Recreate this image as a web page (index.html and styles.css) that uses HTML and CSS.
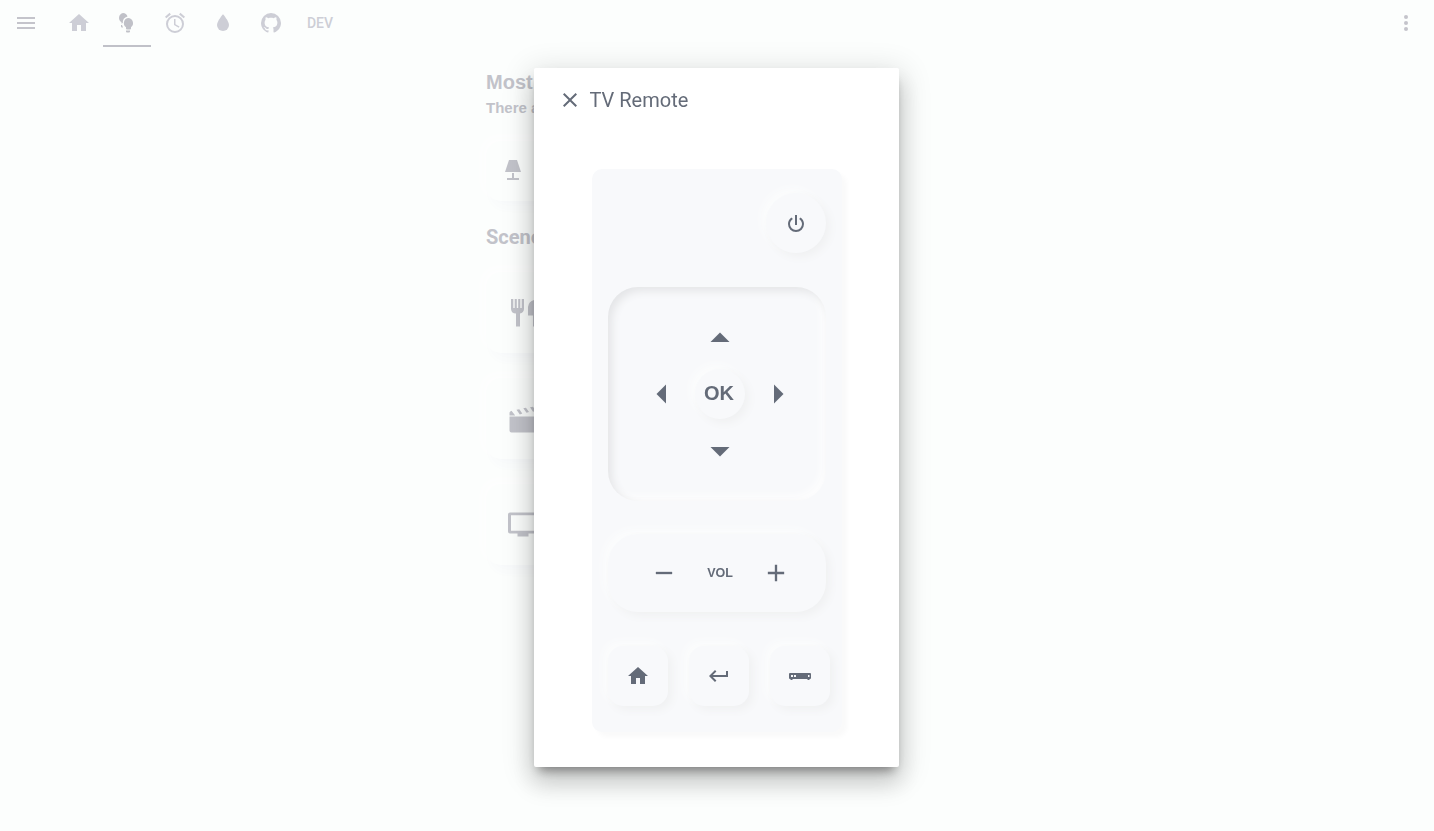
FILE: index.html
```html
<!DOCTYPE html>
<html lang="en">
<head>
<meta charset="utf-8">
<title>TV Remote</title>
<link rel="stylesheet" href="styles.css">
</head>
<body>
<header class="bar">
  <svg class="icon menu" viewBox="0 0 24 24"><path d="M3 6H21V8H3ZM3 11H21V13H3ZM3 16H21V18H3Z"/></svg>
  <nav class="tabs">
    <a class="tab"><svg class="icon" viewBox="0 0 24 24"><path d="M10 20V14H14V20H19V12H22L12 3L2 12H5V20Z"/></svg></a>
    <a class="tab active"><svg class="icon" viewBox="0 0 24 24"><path d="M8 2A5 5 0 0 1 12.500 5.500A6.300 6.300 0 0 0 7.800 12L6.500 12.500V11.200A5 5 0 0 1 8 2Z"/><path d="M6 14H7L8 16.500H7A1 1 0 0 1 6 15.500Z"/><path d="M13 7A5.200 5.200 0 0 1 16 16.300V17.500A1 1 0 0 1 15 18.500H12A1 1 0 0 1 11 17.500V16.300A5.200 5.200 0 0 1 13 7ZM11 19.500H15V20.500A1 1 0 0 1 14 21.500H12A1 1 0 0 1 11 20.500Z"/></svg></a>
    <a class="tab"><svg class="icon" viewBox="0 0 24 24"><path d="M12,20A7,7 0 0,1 5,13A7,7 0 0,1 12,6A7,7 0 0,1 19,13A7,7 0 0,1 12,20M12,4A9,9 0 0,0 3,13A9,9 0 0,0 12,22A9,9 0 0,0 21,13A9,9 0 0,0 12,4M12.5,8H11V14L15.75,16.85L16.5,15.62L12.5,13.25V8M7.88,3.39L6.6,1.86L2,5.71L3.29,7.24L7.88,3.39M22,5.72L17.4,1.86L16.11,3.39L20.71,7.25L22,5.72Z"/></svg></a>
    <a class="tab"><svg class="icon" viewBox="0 0 24 24"><path d="M12,20A6,6 0 0,1 6,14C6,10 12,3.25 12,3.25C12,3.25 18,10 18,14A6,6 0 0,1 12,20Z"/></svg></a>
    <a class="tab"><svg class="icon" viewBox="0 0 24 24"><path d="M12,2A10,10 0 0,0 2,12C2,16.42 4.87,20.17 8.84,21.5C9.34,21.58 9.5,21.27 9.5,21C9.5,20.77 9.5,20.14 9.5,19.31C6.73,19.91 6.14,17.97 6.14,17.97C5.68,16.81 5.03,16.5 5.03,16.5C4.12,15.88 5.1,15.9 5.1,15.9C6.1,15.97 6.63,16.93 6.63,16.93C7.5,18.45 8.97,18 9.54,17.76C9.63,17.11 9.89,16.67 10.17,16.42C7.95,16.17 5.62,15.31 5.62,11.5C5.62,10.39 6,9.5 6.65,8.79C6.55,8.54 6.2,7.5 6.75,6.15C6.75,6.15 7.59,5.88 9.5,7.17C10.29,6.95 11.15,6.84 12,6.84C12.85,6.84 13.71,6.95 14.5,7.17C16.41,5.88 17.25,6.15 17.25,6.15C17.8,7.5 17.45,8.54 17.35,8.79C18,9.5 18.38,10.39 18.38,11.5C18.38,15.32 16.04,16.16 13.81,16.41C14.17,16.72 14.5,17.33 14.5,18.26C14.5,19.6 14.5,20.68 14.5,21C14.5,21.27 14.66,21.59 15.17,21.5C19.14,20.16 22,16.42 22,12A10,10 0 0,0 12,2Z"/></svg></a>
    <a class="tab">DEV</a>
  </nav>
  <svg class="icon more" viewBox="0 0 24 24"><circle cx="12" cy="6" r="2"/><circle cx="12" cy="12" r="2"/><circle cx="12" cy="18" r="2"/></svg>
</header>

<main class="page">
  <h2 class="heading most">Most</h2>
  <p class="status">There are</p>
  <div class="card light"><svg class="icon" viewBox="0 0 24 24"><path d="M8 2H16L20 14H4ZM11 15H13V20H18V22H6V20H11Z"/></svg></div>
  <h2 class="heading scenes">Scenes</h2>
  <div class="stack">
    <div class="card"><svg class="scene-icon" viewBox="0 0 40 40"><path d="M5 6H7.300V15H8.700V6H10.800V15H12.200V6H14.300V15H15.700V6H18V16A5 5 0 0 1 14 20.500V33.500H10V20.500A5 5 0 0 1 5 16ZM22 14A8 8 0 0 1 28 7H34V33.500H27V22.500H22Z"/></svg></div>
    <div class="card"><svg class="scene-icon" viewBox="0 0 40 40"><path d="M3.500 17.500H38V31.500A2 2 0 0 1 36 33.500H5.500A2 2 0 0 1 3.500 31.500ZM3.500 16.500V13.500A3 3 0 0 1 5.500 11.700L9.200 16.500ZM10.500 10.700L13.300 10.200L16.300 14.500L13.800 15.500ZM17.300 9.300L20 8.800L23 13L20.500 13.700ZM24 8.300L27 7.800L30 12L27 12.700Z"/></svg></div>
    <div class="card"><svg class="scene-icon" viewBox="0 0 40 40"><path fill-rule="evenodd" d="M4 7.500H36A2 2 0 0 1 38 9.500V26.500A2 2 0 0 1 36 28.500H22.500V31.500H11.500V28.500H4A2 2 0 0 1 2 26.500V9.500A2 2 0 0 1 4 7.500ZM5 10.300V25.700H35V10.300Z"/></svg></div>
  </div>
</main>

<div class="overlay">
  <section class="dialog">
    <div class="dialog-head">
      <svg class="icon" viewBox="0 0 24 24"><path d="M19,6.41L17.59,5L12,10.59L6.41,5L5,6.41L10.59,12L5,17.59L6.41,19L12,13.41L17.59,19L19,17.59L13.41,12Z"/></svg>
      <span class="title">TV Remote</span>
    </div>
    <div class="remote">
      <button class="key power"><svg class="icon" viewBox="0 0 24 24"><path d="M16.56,5.44L15.11,6.89C16.84,7.94 18,9.83 18,12A6,6 0 0,1 12,18A6,6 0 0,1 6,12C6,9.83 7.16,7.94 8.88,6.88L7.44,5.44C5.36,6.88 4,9.28 4,12A8,8 0 0,0 12,20A8,8 0 0,0 20,12C20,9.28 18.64,6.88 16.56,5.44M13,3H11V13H13"/></svg></button>
      <div class="dpad">
        <svg class="arrow up" viewBox="0 0 20 10"><path d="M0.500 10L10 0.500L19.500 10Z"/></svg>
        <svg class="arrow left" viewBox="0 0 10 20"><path d="M10 0.500L0.500 10L10 19.500Z"/></svg>
        <button class="key ok">OK</button>
        <svg class="arrow right" viewBox="0 0 10 20"><path d="M0 0.500L9.500 10L0 19.500Z"/></svg>
        <svg class="arrow down" viewBox="0 0 20 10"><path d="M0.500 0L10 9.500L19.500 0Z"/></svg>
      </div>
      <div class="volume">
        <svg class="vol-icon" viewBox="0 0 24 24"><path d="M5 11H19V13H5Z"/></svg>
        <span class="vol-label">VOL</span>
        <svg class="vol-icon" viewBox="0 0 24 24"><path d="M11 5H13V11H19V13H13V19H11V13H5V11H11Z"/></svg>
      </div>
      <div class="keys">
        <button class="key"><svg class="icon" viewBox="0 0 24 24"><path d="M10 20V14H14V20H19V12H22L12 3L2 12H5V20Z"/></svg></button>
        <button class="key"><svg class="icon" viewBox="0 0 24 24"><path d="M19,7V11H5.83L9.41,7.41L8,6L2,12L8,18L9.41,16.58L5.83,13H21V7H19Z"/></svg></button>
        <button class="key"><svg class="icon" viewBox="0 0 24 24"><path fill-rule="evenodd" d="M2 9H22A1 1 0 0 1 23 10V14A1 1 0 0 1 22 15H21.500V16H19.500V15H4.500V16H2.500V15H2A1 1 0 0 1 1 14V10A1 1 0 0 1 2 9ZM3 11V13H5V11ZM6 11V13H8V11ZM20 11V13H21.500V11Z"/></svg></button>
      </div>
    </div>
  </section>
</div>
</body>
</html>
```

FILE: styles.css
```css
* { box-sizing: border-box; }
body {
  margin: 0;
  height: 831px;
  overflow: hidden;
  background: #fcfefd;
  font-family: Roboto, sans-serif;
}
svg { display: block; fill: currentColor; flex: none; }
.icon { width: 24px; height: 24px; }
button { border: 0; padding: 0; font: inherit; color: inherit; }

.bar {
  display: flex;
  height: 47px;
  align-items: center;
  padding: 0 16px 0 14px;
  color: #c4c4cb;
}
.menu, .more { margin-bottom: 1px; }
.tabs { display: flex; height: 47px; margin-left: 17px; color: #cdced6; }
.tab {
  display: flex;
  width: 48px;
  align-items: center;
  justify-content: center;
  border-bottom: 2px solid transparent;
  border-top: 1px solid transparent;
  font-size: 14px;
  font-weight: 500;
}
.tab:last-child { width: 50px; }
.tab.active { color: #c0c1c8; border-bottom-color: #c0c1c8; }
.more { margin-left: auto; }

.page { width: 462px; margin: 0 auto; padding-top: 23px; color: #c2c3ca; }
.heading { margin: 0; font-size: 20px; line-height: 24px; font-weight: 700; }
.most { font-family: "Liberation Sans", sans-serif; }
.status {
  margin: 4px 0 0;
  font: 700 15px/20px "Liberation Sans", sans-serif;
}
.card {
  display: flex;
  width: 380px;
  height: 81px;
  padding-left: 20px;
  align-items: center;
  border-radius: 15px;
  background: #fcfefd;
  box-shadow: 5px 7px 10px rgba(70, 70, 150, .022), -4px -4px 8px #fefefe;
}
.light { height: 60px; margin-top: 23px; padding: 0 0 2px 15px; }
.scenes { margin-top: 24px; }
.stack { display: grid; gap: 25px; margin-top: 23px; }
.scene-icon { width: 40px; height: 40px; }

.overlay {
  position: fixed;
  inset: 0;
  display: flex;
  justify-content: center;
  align-items: flex-start;
  padding: 68px 1px 0 0;
}
.dialog {
  width: 365px;
  height: 699px;
  border-radius: 2px;
  background: #fff;
  color: #646b78;
  box-shadow: 0 16px 24px 2px rgba(0, 0, 0, .14), 0 6px 30px 5px rgba(0, 0, 0, .12), 0 8px 10px -5px rgba(0, 0, 0, .4);
}
.dialog-head { display: flex; height: 64px; align-items: center; padding-left: 24px; gap: 7.500px; }
.title { font-size: 20px; }

.remote {
  width: 250px;
  height: 563px;
  margin: 37px 0 0 58px;
  padding: 24px 16px;
  border-radius: 10px;
  background: #f8f9fb;
  box-shadow: 5px 5px 5px #fafafa;
}
.key {
  display: flex;
  width: 60px;
  height: 60px;
  align-items: center;
  justify-content: center;
  border-radius: 15px;
  background: #f8f9fb;
  box-shadow: 4px 4px 8px #f0f1f2, -4px -4px 8px #fcfdfd;
}
.power { margin-left: auto; padding-top: 1px; border-radius: 50%; }
.dpad {
  display: grid;
  grid-template: 57px 57px 60px / 59px 59px 59px;
  grid-template-areas: ". up ." "left ok right" ". down .";
  place-content: center;
  place-items: center;
  height: 214px;
  margin-top: 34px;
  padding: 2px 0 0 6px;
  border-radius: 30px;
  background: #f8f9fb;
  box-shadow: inset 4px 4px 8px #e4e5e7, inset -4px -4px 8px #fefefe;
}
.arrow { width: 20px; height: 10px; }
.up { grid-area: up; }
.down { grid-area: down; }
.left, .right { width: 10px; height: 20px; }
.left { grid-area: left; }
.right { grid-area: right; }
.ok {
  grid-area: ok;
  width: 50px;
  height: 50px;
  padding: 0 2px 1px 0;
  border-radius: 50%;
  font: 700 20px "Liberation Sans", sans-serif;
}
.volume {
  display: flex;
  height: 78px;
  margin-top: 33px;
  padding: 0 36px 0 42px;
  align-items: center;
  justify-content: space-between;
  border-radius: 30px;
  box-shadow: 4px 4px 8px #f0f1f2, -4px -4px 8px #fcfdfd;
}
.vol-icon { width: 28px; height: 28px; }
.vol-label { font: 700 12.500px "Liberation Sans", sans-serif; }
.keys { display: grid; grid-template-columns: repeat(3, 60px); gap: 21px; margin-top: 34px; }
```
